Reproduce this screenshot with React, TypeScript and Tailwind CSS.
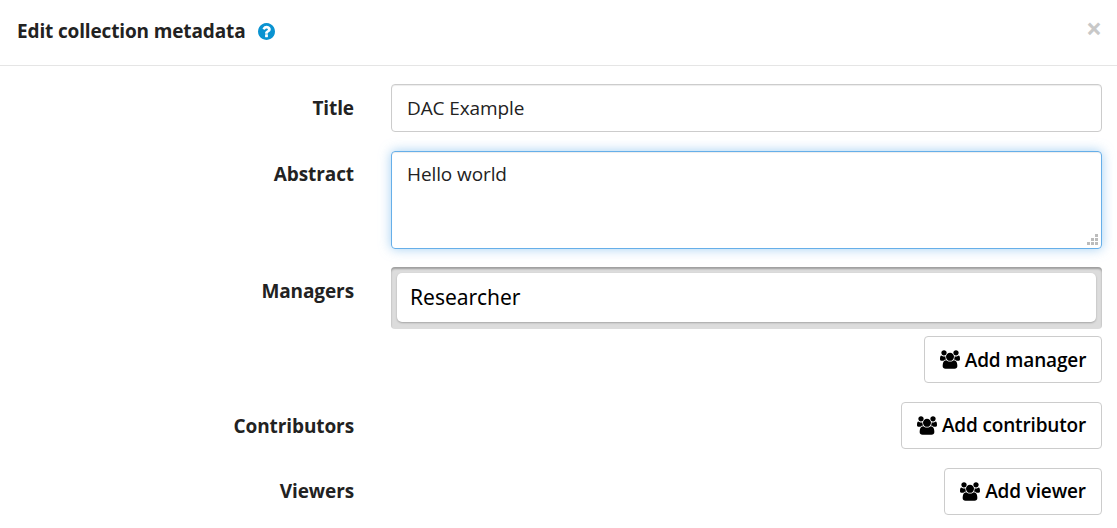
import type { ReactNode } from "react";

function UsersIcon() {
  return (
    <svg viewBox="64 0 1920 1792" className="h-[19px] w-[20px] shrink-0" fill="currentColor" aria-hidden="true">
      <path d="M657 896q-162 5-265 128h-134q-82 0-138-40.5t-56-118.5q0-353 124-353 6 0 43.5 21t97.5 42.5 119 21.5q67 0 133-23-5 37-5 66 0 139 81 256zm1071 637q0 120-73 189.5t-194 69.5h-874q-121 0-194-69.5t-73-189.5q0-53 3.5-103.5t14-109 26.5-108.5 43-97.5 62-81 85.5-53.5 111.5-20q10 0 43 21.5t73 48 107 48 135 21.5 135-21.5 107-48 73-48 43-21.5q61 0 111.5 20t85.5 53.5 62 81 43 97.5 26.5 108.5 14 109 3.5 103.5zm-1024-1277q0 106-75 181t-181 75-181-75-75-181 75-181 181-75 181 75 75 181zm704 384q0 159-112.5 271.5t-271.5 112.5-271.5-112.5-112.5-271.5 112.5-271.5 271.5-112.5 271.5 112.5 112.5 271.5zm576 225q0 78-56 118.5t-138 40.5h-134q-103-123-265-128 81-117 81-256 0-29-5-66 66 23 133 23 59 0 119-21.5t97.5-42.5 43.5-21q124 0 124 353zm-128-609q0 106-75 181t-181 75-181-75-75-181 75-181 181-75 181 75 75 181z" />
    </svg>
  );
}

function HelpIcon() {
  return (
    <svg viewBox="128 128 1536 1536" className="ml-[13px] mt-[23px] size-[17px] text-[#0a93d1]" fill="currentColor" aria-hidden="true">
      <path d="M1024 1376v-192q0-14-9-23t-23-9h-192q-14 0-23 9t-9 23v192q0 14 9 23t23 9h192q14 0 23-9t9-23zm256-672q0-88-55.5-163t-138.5-116-170-41q-243 0-371 213-15 24 8 42l132 100q7 6 19 6 16 0 25-12 53-68 86-92 34-24 86-24 48 0 85.5 26t37.5 59q0 38-20 61t-68 45q-63 28-115.5 86.5t-52.5 125.5v36q0 14 9 23t23 9h192q14 0 23-9t9-23q0-19 21.5-49.5t54.5-49.5q32-18 49-28.5t46-35 44.5-48 28-60.5 12.5-81zm384 192q0 209-103 385.5t-279.5 279.5-385.5 103-385.5-103-279.5-279.5-103-385.5 103-385.5 279.5-279.5 385.5-103 385.5 103 279.5 279.5 103 385.5z" />
    </svg>
  );
}

function ResizeGrip() {
  return (
    <svg viewBox="0 0 11 12" className="absolute bottom-[3px] right-[4px] h-[12px] w-[11px]" fill="#bcbcbc" aria-hidden="true">
      <path d="M8 0h3v3h-3zM4 4h3v3h-3zM8 4h3v3h-3zM0 8h3v3h-3zM4 8h3v3h-3zM8 8h3v3h-3z" />
    </svg>
  );
}

function Label({ children, className }: { children: ReactNode; className: string }) {
  return <div className={`w-[354px] shrink-0 text-right font-bold leading-[28px] tracking-[-0.1px] ${className}`}>{children}</div>;
}

function AddButton({ children, className, textClassName = "" }: { children: ReactNode; className: string; textClassName?: string }) {
  return (
    <button className={`flex h-[47px] items-center justify-center gap-[5px] rounded-[4px] border border-[#ccc] bg-white font-semibold tracking-[-0.15px] text-black ${className}`}>
      <UsersIcon />
      <span className={textClassName}>{children}</span>
    </button>
  );
}

export default function App() {
  return (
    <div className="h-[528px] w-[1117px] overflow-hidden bg-white font-['Open_Sans',sans-serif] text-[19px] text-[#222]">
      <header className="flex h-[66px] items-start border-b border-[#e5e5e5] pl-[17px] pr-[15px]">
        <h1 className="mt-[17px] font-bold leading-[28px] tracking-[-0.14px]">Edit collection metadata</h1>
        <HelpIcon />
        <button className="ml-auto mt-[14px] text-[28px] font-bold leading-[28px] text-[#c8c8c8]">×</button>
      </header>
      <div className="flex h-[66px] gap-[37px] pt-[18px]">
        <Label className="pt-[10px]">Title</Label>
        <input defaultValue="DAC Example" className="h-[48px] w-[711px] rounded-[4px] border border-[#ccc] px-[15px] tracking-[-0.1px] shadow-[inset_0_1px_1px_#00000013] outline-none" />
      </div>
      <div className="flex h-[117px] gap-[37px] pt-[19px]">
        <Label className="pt-[9px]">Abstract</Label>
        <div className="relative h-[98px] w-[711px]">
          <textarea defaultValue="Hello world" className="block size-full resize-none rounded-[4px] border border-[#66afe9] px-[15px] pt-[8px] leading-[28px] tracking-[-0.1px] shadow-[inset_0_1px_1px_#00000013,0_0_12px_#66afe999] outline-none" />
          <ResizeGrip />
        </div>
      </div>
      <div className="flex h-[87px] gap-[37px] pt-[18px]">
        <Label className="pt-[10px]">Managers</Label>
        <div className="h-[62px] w-[711px] rounded-[4px] bg-[#dcdcdc] pb-[6px] pl-[6px] pr-[6px] pt-[6px] shadow-[inset_0_2px_2px_#00000048]">
          <div className="h-[49px] rounded-[5px] bg-white px-[13px] text-black shadow-[0_1px_2px_#00000040]">
            <span className="inline-block origin-left scale-x-[0.955] font-['Noto_Sans',sans-serif] text-[22px] leading-[46px]">Researcher</span>
          </div>
        </div>
      </div>
      <div className="flex h-[66px] justify-end pr-[15px]"><AddButton className="w-[178px]" textClassName="pt-[2px]">Add manager</AddButton></div>
      <div className="flex h-[66px] justify-between pr-[15px]"><Label className="pt-[10px]">Contributors</Label><AddButton className="w-[201px]">Add contributor</AddButton></div>
      <div className="flex justify-between pr-[15px]"><Label className="pt-[9px]">Viewers</Label><AddButton className="w-[158px]">Add viewer</AddButton></div>
    </div>
  );
}
